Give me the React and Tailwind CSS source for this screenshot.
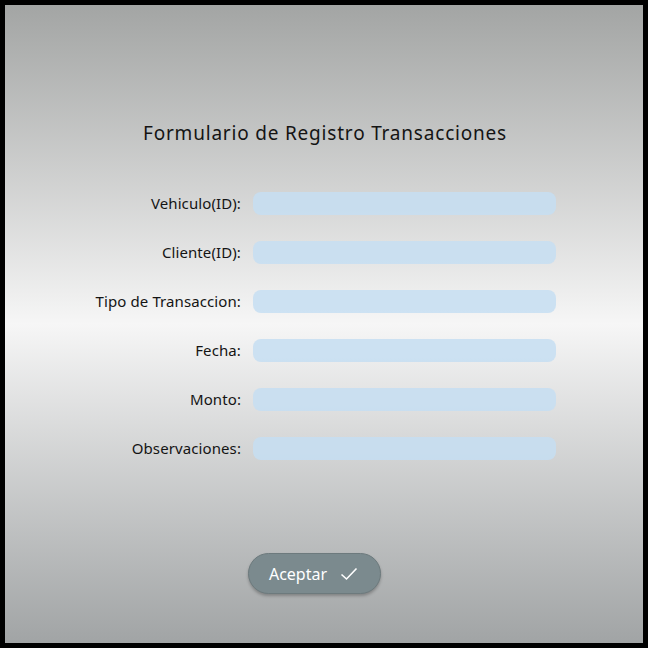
import React from "react";

const fields = ["Vehiculo(ID):", "Cliente(ID):", "Tipo de Transaccion:", "Fecha:", "Monto:", "Observaciones:"];

export default function App() {
  return (
    <div className="w-[648px] h-[648px] bg-black p-[5px]" style={{ fontFamily: '"Noto Sans", sans-serif' }}>
      <div className="w-[638px] h-[638px] bg-linear-to-b from-[#a3a5a4] via-[#f6f6f6] to-[#a1a4a5] flex flex-col items-center">
        <h1 className="mt-[106px] text-[19px] leading-[44px] text-[#141414] tracking-[0.8px] pl-[2px]">Formulario de Registro Transacciones</h1>
        <div className="mt-[37px] flex flex-col gap-[26px] w-full">
          {fields.map((f) => (
            <div key={f} className="flex items-center h-[23px]">
              <div className="w-[236px] text-right text-[15px] text-[#141414] tracking-[0.1px]">{f}</div>
              <div className="ml-[12px] w-[303px] h-[23px] rounded-[8px] bg-[#c6def2]/85" />
            </div>
          ))}
        </div>
        <button className="mt-[93px] mr-[19px] w-[133px] h-[41px] rounded-full bg-[#7b8a8e] border border-[#6d7a7d] shadow-[0_2px_3px_rgba(0,0,0,0.25)] flex items-center justify-center gap-[13px] pr-[2px] text-white text-[16px]">
          <span>Aceptar</span>
          <svg width="18" height="14" viewBox="0 0 18 14" fill="none" stroke="white" strokeWidth="1.6">
            <path d="M1.5 7.5 L6.5 12 L16.5 1.5" />
          </svg>
        </button>
      </div>
    </div>
  );
}
